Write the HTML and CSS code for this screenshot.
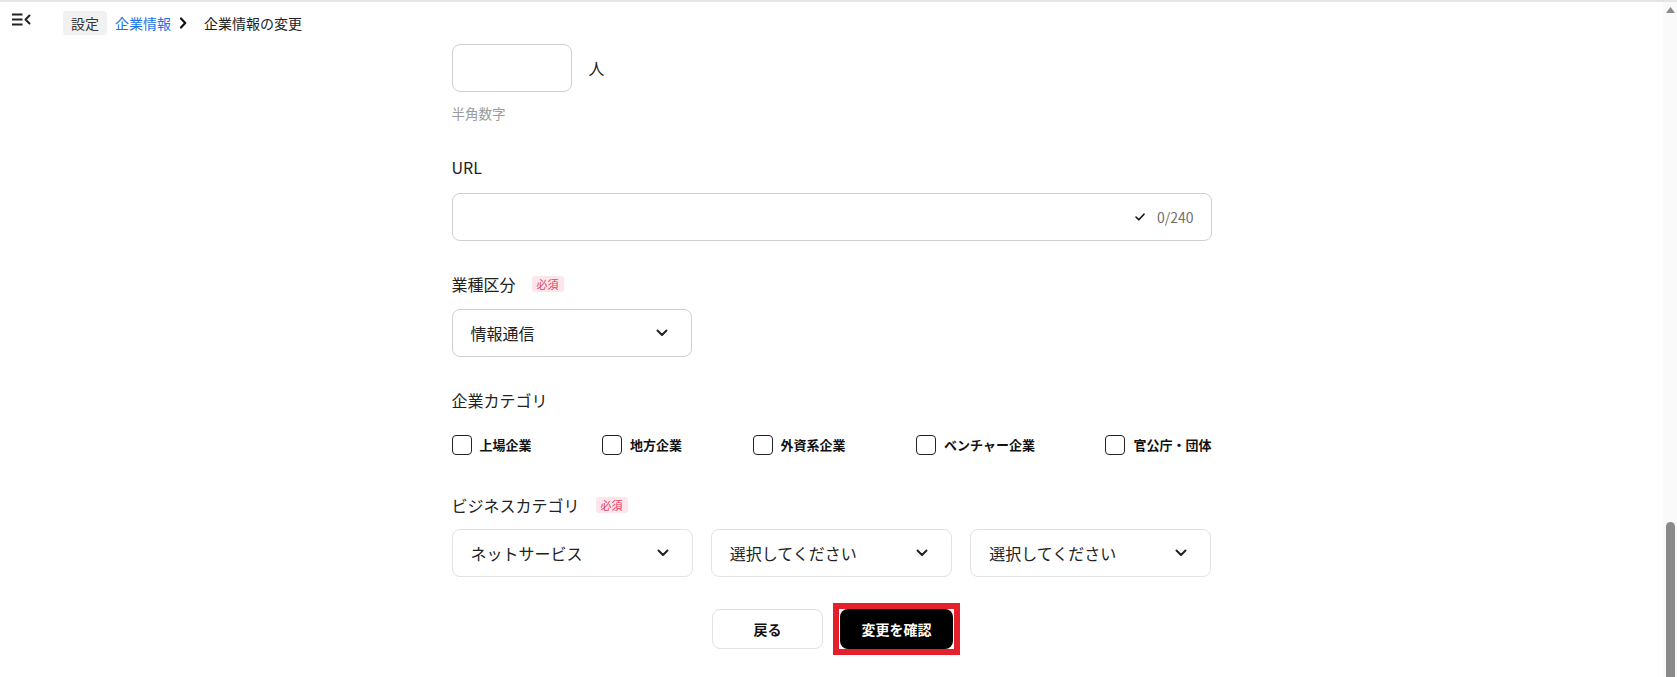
FILE: index.html
```html
<!DOCTYPE html>
<html lang="ja">
<head>
<meta charset="utf-8">
<title>企業情報の変更</title>
<link rel="stylesheet" href="styles.css">
</head>
<body>
<div class="frame">
  <div class="main">
    <header class="topbar">
      <span class="menu-btn">
        <svg width="20" height="14" viewBox="0 0 20 14" aria-hidden="true">
          <path d="M0 1.5H10.5M0 6.5H10.5M0 11.5H10.5" stroke="#222" stroke-width="2" fill="none"/>
          <polyline points="17.5,2.5 13.5,6.5 17.5,10.5" stroke="#222" stroke-width="2" fill="none" stroke-linecap="round" stroke-linejoin="round"/>
        </svg>
      </span>
      <nav class="crumbs">
        <span class="crumb-home">設定</span>
        <span class="crumb-link">企業情報</span>
        <svg class="crumb-sep" width="8" height="12" viewBox="0 0 8 12" aria-hidden="true">
          <polyline points="2,1.5 6.2,6 2,10.5" stroke="#111" stroke-width="2.2" fill="none" stroke-linecap="round" stroke-linejoin="round"/>
        </svg>
        <span class="crumb-current">企業情報の変更</span>
      </nav>
    </header>

    <form class="form">
      <div class="field field-count">
        <div class="count-row">
          <span class="input count-input"></span>
          <span class="unit">人</span>
        </div>
        <p class="hint">半角数字</p>
      </div>

      <div class="field field-url">
        <div class="label label-url">URL</div>
        <div class="input url-input">
          <span class="counter">
            <svg width="10" height="8" viewBox="0 0 10 8" aria-hidden="true">
              <polyline points="1,4 3.8,6.8 9,1.2" stroke="#111" stroke-width="1.6" fill="none" stroke-linecap="round" stroke-linejoin="round"/>
            </svg>
            <span class="counter-text">0/240</span>
          </span>
        </div>
      </div>

      <div class="field">
        <div class="label">業種区分<span class="badge">必須</span></div>
        <div class="select select-industry">
          <span>情報通信</span>
          <svg width="12" height="8" viewBox="0 0 12 8" aria-hidden="true">
            <polyline points="1.5,1.5 6,6 10.5,1.5" stroke="#222" stroke-width="2" fill="none" stroke-linecap="round" stroke-linejoin="round"/>
          </svg>
        </div>
      </div>

      <div class="field">
        <div class="label label-checks">企業カテゴリ</div>
        <div class="checks">
          <label class="check"><span class="box"></span>上場企業</label>
          <label class="check"><span class="box"></span>地方企業</label>
          <label class="check"><span class="box"></span>外資系企業</label>
          <label class="check"><span class="box"></span>ベンチャー企業</label>
          <label class="check"><span class="box"></span>官公庁・団体</label>
        </div>
      </div>

      <div class="field field-business">
        <div class="label label-business">ビジネスカテゴリ<span class="badge">必須</span></div>
        <div class="select-grid">
          <div class="select select-light">
            <span>ネットサービス</span>
            <svg width="12" height="8" viewBox="0 0 12 8" aria-hidden="true">
              <polyline points="1.5,1.5 6,6 10.5,1.5" stroke="#222" stroke-width="2" fill="none" stroke-linecap="round" stroke-linejoin="round"/>
            </svg>
          </div>
          <div class="select select-light">
            <span>選択してください</span>
            <svg width="12" height="8" viewBox="0 0 12 8" aria-hidden="true">
              <polyline points="1.5,1.5 6,6 10.5,1.5" stroke="#222" stroke-width="2" fill="none" stroke-linecap="round" stroke-linejoin="round"/>
            </svg>
          </div>
          <div class="select select-light">
            <span>選択してください</span>
            <svg width="12" height="8" viewBox="0 0 12 8" aria-hidden="true">
              <polyline points="1.5,1.5 6,6 10.5,1.5" stroke="#222" stroke-width="2" fill="none" stroke-linecap="round" stroke-linejoin="round"/>
            </svg>
          </div>
        </div>
      </div>

      <div class="actions">
        <span class="btn btn-back">戻る</span>
        <span class="highlight">
          <span class="btn btn-confirm">変更を確認</span>
        </span>
      </div>
    </form>
  </div>

  <div class="scrollbar">
    <svg class="scroll-arrow" width="9" height="6" viewBox="0 0 9 6" aria-hidden="true">
      <polygon points="4.5,0 9,6 0,6" fill="#8a8a8a"/>
    </svg>
    <span class="scroll-thumb"></span>
  </div>
</div>
</body>
</html>
```

FILE: styles.css
```css
* {
  box-sizing: border-box;
}

html,
body {
  margin: 0;
  height: 100%;
  overflow: hidden;
  background: #fff;
}

body {
  font-family: "Noto Sans CJK JP", "Noto Sans", sans-serif;
  color: #222;
}

.frame {
  display: flex;
  height: 677px;
  border-top: 2px solid #e6e6e6;
}

.main {
  flex: 1;
  min-width: 0;
  display: flex;
  flex-direction: column;
}

/* header */
.topbar {
  height: 42px;
  display: flex;
  align-items: center;
  padding-left: 12px;
  flex-shrink: 0;
}

.menu-btn {
  display: flex;
  align-self: flex-start;
  margin-top: 11px;
}

.crumbs {
  display: flex;
  align-items: center;
  margin-left: 31px;
  font-size: 14px;
  line-height: 20px;
}

.crumb-home {
  background: #f1f1f1;
  border-radius: 4px;
  padding: 2px 8px;
  color: #333;
}

.crumb-link {
  margin-left: 8px;
  color: #1d72e8;
}

.crumb-sep {
  margin-left: 8px;
  margin-right: 17px;
}

.crumb-current {
  color: #222;
}

/* form */
.form {
  width: 760px;
  margin: 0 auto;
  display: flex;
  flex-direction: column;
}

.field + .field {
  margin-top: 31px;
}

.field.field-url {
  margin-top: 32px;
}

.field.field-business {
  margin-top: 38px;
}

.label {
  display: flex;
  align-items: center;
  font-size: 16px;
  line-height: 24px;
  margin-bottom: 13px;
  color: #222;
}

.label-url {
  margin-bottom: 14px;
}

.label-checks {
  margin-bottom: 23px;
}

.label-business {
  margin-bottom: 12px;
}

.badge {
  margin-left: 16px;
  background: #fde6eb;
  color: #e33a62;
  font-size: 11px;
  line-height: 16px;
  padding: 0 5px;
  border-radius: 3px;
}

.input {
  display: flex;
  height: 48px;
  border: 1px solid #cfcfcf;
  border-radius: 8px;
  background: #fff;
}

.count-row {
  display: flex;
  align-items: center;
}

.count-input {
  width: 120px;
}

.unit {
  margin-left: 17px;
  font-size: 16px;
  line-height: 24px;
  color: #222;
}

.hint {
  margin: 11px 0 0;
  font-size: 13.5px;
  line-height: 20px;
  color: #9a9a9a;
}

.url-input {
  justify-content: flex-end;
  align-items: center;
  padding-right: 17px;
}

.counter {
  display: flex;
  align-items: center;
  gap: 12px;
}

.counter-text {
  font-size: 14px;
  color: #6f6f6f;
}

.select {
  display: flex;
  align-items: center;
  justify-content: space-between;
  height: 48px;
  padding: 0 23px 0 18px;
  border: 1px solid #cfcfcf;
  border-radius: 8px;
  font-size: 16px;
  color: #222;
}

.select-industry {
  width: 240px;
}

.select-light {
  border-color: #e3e3e3;
}

.select-grid {
  display: grid;
  grid-template-columns: repeat(3, 1fr);
  gap: 18px;
}

/* checkboxes */
.checks {
  display: flex;
  justify-content: space-between;
}

.check {
  display: flex;
  align-items: center;
  gap: 8px;
  font-size: 13px;
  font-weight: 700;
  line-height: 20px;
  color: #111;
}

.box {
  width: 20px;
  height: 20px;
  border: 1.5px solid #222;
  border-radius: 4px;
  background: #fff;
}

/* buttons */
.actions {
  display: flex;
  justify-content: center;
  align-items: center;
  gap: 10px;
  margin-top: 26px;
  padding-left: 9px;
}

.btn {
  display: flex;
  align-items: center;
  justify-content: center;
  height: 40px;
  border-radius: 8px;
  font-size: 14px;
  font-weight: 700;
}

.btn-back {
  width: 111px;
  border: 1px solid #e2e2e2;
  color: #111;
  background: #fff;
}

.highlight {
  display: flex;
  border: 6px solid #e51f2b;
  padding: 0 1px;
}

.btn-confirm {
  width: 113px;
  background: #000;
  color: #fff;
}

/* scrollbar */
.scrollbar {
  width: 14px;
  flex-shrink: 0;
  background: #fafafa;
  display: flex;
  flex-direction: column;
  align-items: center;
}

.scroll-arrow {
  margin-top: 5px;
}

.scroll-thumb {
  margin-top: auto;
  width: 9px;
  height: 155px;
  background: #8a8a8a;
  border-radius: 5px 5px 0 0;
}
```
